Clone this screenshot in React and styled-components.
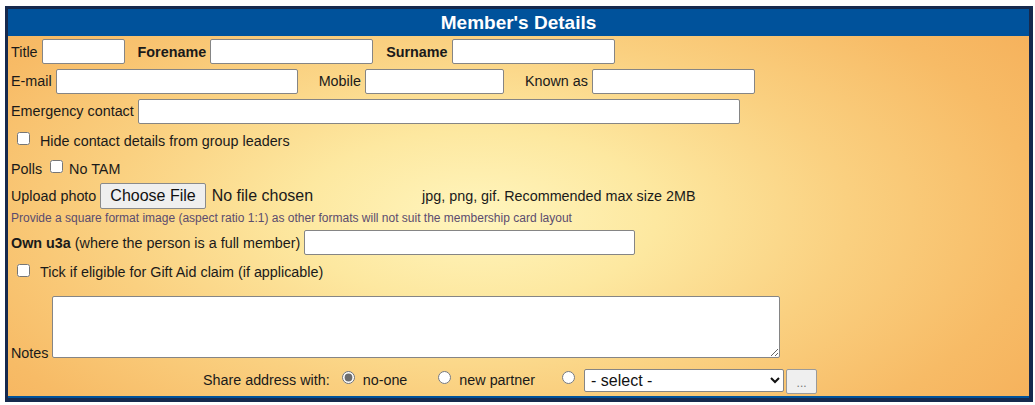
import React from "react";
import styled, { createGlobalStyle } from "styled-components";

const Global = createGlobalStyle`
  html, body { margin: 0; padding: 0; background: #fff; }
  body { font-family: "Liberation Sans", Arial, sans-serif; font-size: 14.35px; color: #1a1a1a; }
  * { box-sizing: border-box; }
`;

const Panel = styled.div`
  margin: 6px 0 0 5px;
  width: 1028px;
  border: 3px solid #16294d;
  border-right-width: 4px;
  border-bottom-width: 4px;
  background: #00529b;
`;

const Header = styled.div`
  height: 27px;
  background: #00529b;
  color: #fff;
  font-weight: bold;
  font-size: 19px;
  display: flex;
  align-items: center;
  justify-content: center;
  padding-top: 1px;
`;

const Body = styled.div`
  display: flex;
  flex-direction: column;
  padding: 1px 3px 0 3px;
  border-bottom: 2px solid #00529b;
  background: radial-gradient(
    ellipse 70% 95% at 46% 50%,
    #fff5bd 0%,
    #fde8a0 25%,
    #fad080 52%,
    #f7bb66 78%,
    #f5ae58 100%
  );
`;

const Row = styled.div`
  display: flex;
  align-items: center;
  height: ${(p) => p.$h}px;
  gap: ${(p) => p.$gap ?? 0}px;
`;

const Field = styled.label`
  display: flex;
  align-items: center;
  gap: 4px;
  white-space: pre;
`;

const CheckLabel = styled.label`
  display: flex;
  align-items: center;
  gap: ${(p) => p.$gap ?? 10}px;
  padding-left: ${(p) => p.$indent ?? 6}px;
`;

const Bold = styled.b`
  font-weight: bold;
`;

const TextInput = styled.input`
  width: ${(p) => p.$w}px;
  height: 25px;
  border: 1px solid #858585;
  border-radius: 2px;
  background: #fff;
  padding: 1px 3px;
  font: 14px "Liberation Sans", Arial, sans-serif;
  margin: 0;
`;

const Check = styled.input.attrs({ type: "checkbox" })`
  width: 13px;
  height: 13px;
  margin: 0 0 4px 0;
`;

const FileGroup = styled.div`
  display: flex;
  align-items: center;
  gap: 6px;
  font-size: 16px;
`;

const FileButton = styled.button`
  height: 26px;
  padding: 0 9px;
  margin: 0;
  border: 1px solid #8a8a8a;
  border-radius: 2px;
  background: #efefef;
  font: 16px "Liberation Sans", Arial, sans-serif;
  color: #111;
`;

const Small = styled.div`
  font-size: 12px;
  color: #5b4c6e;
  height: 17px;
  line-height: 17px;
`;

const NotesRow = styled.label`
  display: flex;
  align-items: flex-end;
  gap: 4px;
  margin-top: 10px;
  line-height: 18px;
`;

const NotesLabel = styled.span`
  margin-bottom: -4px;
`;

const Notes = styled.textarea`
  width: 728px;
  height: 62px;
  border: 1px solid #858585;
  border-radius: 2px;
  background: #fff;
  margin: 0;
  font: 14px "Liberation Sans", Arial, sans-serif;
`;

const ShareRow = styled.div`
  display: flex;
  align-items: center;
  justify-content: center;
  height: 38px;
  padding: 6px 17px 0 0;
`;

const ShareTitle = styled.span`
  margin-right: 12px;
`;

const RadioOption = styled.label`
  display: flex;
  align-items: center;
  gap: 8px;
  margin-right: ${(p) => p.$after ?? 0}px;
`;

const Radio = styled.input.attrs({ type: "radio" })`
  width: 13px;
  height: 13px;
  margin: 0 0 5px 0;
  accent-color: #6d6d6d;
`;

const Select = styled.select`
  width: 200px;
  height: 23px;
  border: 1px solid #858585;
  border-radius: 2px;
  background: #fff;
  font: 16px "Liberation Sans", Arial, sans-serif;
  color: #111;
  padding: 0 2px;
  margin: 0 2px 0 0;
`;

const DotsButton = styled.button`
  width: 31px;
  height: 25px;
  border: 1px solid #9a9a9a;
  border-radius: 2px;
  background: #efefef;
  color: #777;
  font: 12px "Liberation Sans", Arial, sans-serif;
  padding: 4px 0 0;
  margin: 2px 0 0;
`;

export default function App() {
  return (
    <>
      <Global />
      <Panel>
        <Header>Member's Details</Header>
        <Body>
          <Row $h={29} $gap={13}>
            <Field>Title<TextInput $w={83} /></Field>
            <Field><Bold>Forename</Bold><TextInput $w={163} /></Field>
            <Field><Bold>Surname</Bold><TextInput $w={163} /></Field>
          </Row>
          <Row $h={30} $gap={21}>
            <Field>E-mail<TextInput $w={242} /></Field>
            <Field>Mobile<TextInput $w={139} /></Field>
            <Field>Known as<TextInput $w={163} /></Field>
          </Row>
          <Row $h={30}>
            <Field>Emergency contact<TextInput $w={602} /></Field>
          </Row>
          <Row $h={29}>
            <CheckLabel><Check />Hide contact details from group leaders</CheckLabel>
          </Row>
          <Row $h={27} $gap={8}>
            <span>Polls</span>
            <CheckLabel $indent={0} $gap={6}><Check />No TAM</CheckLabel>
          </Row>
          <Row $h={28} $gap={109}>
            <Field>
              Upload photo
              <FileGroup>
                <FileButton type="button">Choose File</FileButton>
                <span>No file chosen</span>
              </FileGroup>
            </Field>
            <span>jpg, png, gif. Recommended max size 2MB</span>
          </Row>
          <Small>
            Provide a square format image (aspect ratio 1:1) as other formats will not suit the membership card layout
          </Small>
          <Row $h={31}>
            <Field>
              <span><Bold>Own u3a</Bold> (where the person is a full member)</span>
              <TextInput $w={331} />
            </Field>
          </Row>
          <Row $h={28}>
            <CheckLabel><Check />Tick if eligible for Gift Aid claim (if applicable)</CheckLabel>
          </Row>
          <NotesRow>
            <NotesLabel>Notes</NotesLabel>
            <Notes />
          </NotesRow>
          <ShareRow>
            <ShareTitle>Share address with:</ShareTitle>
            <RadioOption $after={31}><Radio defaultChecked name="share" />no-one</RadioOption>
            <RadioOption $after={27}><Radio name="share" />new partner</RadioOption>
            <RadioOption $after={9}><Radio name="share" /></RadioOption>
            <Select defaultValue="">
              <option value="">- select -</option>
            </Select>
            <DotsButton type="button">...</DotsButton>
          </ShareRow>
        </Body>
      </Panel>
    </>
  );
}
